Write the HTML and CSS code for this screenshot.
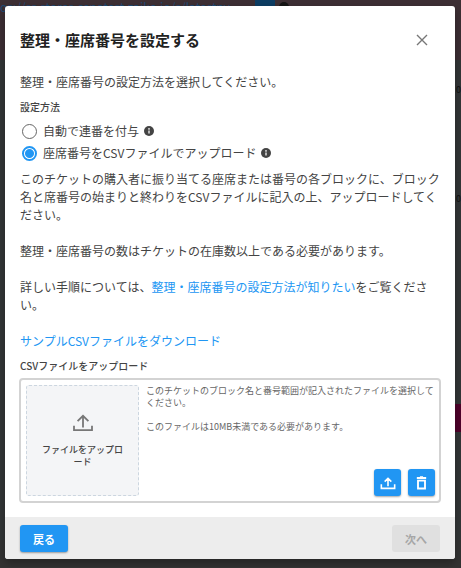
FILE: index.html
```
<!DOCTYPE html>
<html lang="ja">
<head>
  <meta charset="UTF-8" />
  <meta name="viewport" content="width=device-width, initial-scale=1.0"/>
  <title>整理・座席番号を設定する</title>
  <link rel="stylesheet" href="styles.css">
</head>
<body>
  <!-- dimmed page behind the dialog -->
  <div class="page-behind" aria-hidden="true">
    <div class="banner">
      <span class="banner-url">os://ss.stores.cenatest.zaiko.io/s/latestnv</span>
      <span class="banner-copy"></span>
      <span class="banner-info"></span>
    </div>
    <span class="stat stat-one">0</span>
    <span class="stat stat-two">0</span>
    <span class="pink-block"></span>
  </div>

  <main class="dialog" role="dialog" aria-labelledby="dialog-title">
    <header class="dialog-header">
      <h1 id="dialog-title">整理・座席番号を設定する</h1>
      <button type="button" class="close-btn" aria-label="閉じる">
        <svg viewBox="0 0 12 12" width="12" height="12"><path d="M1 1l10 10M11 1L1 11" /></svg>
      </button>
    </header>

    <div class="dialog-body">
      <p class="lead">整理・座席番号の設定方法を選択してください。</p>

      <fieldset class="methods">
        <legend>設定方法</legend>
        <div class="method">
          <input type="radio" name="method" id="auto">
          <label for="auto">自動で連番を付与</label>
          <svg class="info" viewBox="0 0 24 24"><circle cx="12" cy="12" r="12" /><path d="M12 5v4M12 11v7" /></svg>
        </div>
        <div class="method">
          <input type="radio" name="method" id="csv" checked>
          <label for="csv">座席番号をCSVファイルでアップロード</label>
          <svg class="info" viewBox="0 0 24 24"><circle cx="12" cy="12" r="12" /><path d="M12 5v4M12 11v7" /></svg>
        </div>
      </fieldset>

      <p>このチケットの購入者に振り当てる座席または番号の各ブロックに、ブロック名と席番号の始まりと終わりをCSVファイルに記入の上、アップロードしてください。</p>
      <p>整理・座席番号の数はチケットの在庫数以上である必要があります。</p>
      <p>詳しい手順については、<a href="#">整理・座席番号の設定方法が知りたい</a>をご覧ください。</p>
      <p class="sample"><a href="#">サンプルCSVファイルをダウンロード</a></p>

      <h2>CSVファイルをアップロード</h2>
      <div class="upload">
        <button type="button" class="dropzone">
          <svg class="dropzone-icon" viewBox="0 0 24 20"><path d="M2 13v5h20v-5M12 15V2M6 8l6-6 6 6" /></svg>
          <span>ファイルをアップロード</span>
        </button>
        <div class="upload-info">
          <p>このチケットのブロック名と番号範囲が記入されたファイルを選択してください。</p>
          <p>このファイルは10MB未満である必要があります。</p>
          <div class="upload-actions">
            <button type="button" class="btn btn-icon" aria-label="アップロード">
              <svg viewBox="0 0 24 20" width="16" height="14"><path d="M2 12v6h20v-6M12 15V3M7 8l5-5 5 5" /></svg>
            </button>
            <button type="button" class="btn btn-icon" aria-label="削除">
              <svg viewBox="0 0 14 18" width="11" height="14"><path d="M2.5 6h9v10h-9zM1 2.5h12M5 1.5h4" /></svg>
            </button>
          </div>
        </div>
      </div>
    </div>

    <footer class="dialog-footer">
      <button type="button" class="btn">戻る</button>
      <button type="button" class="btn" disabled>次へ</button>
    </footer>
  </main>
</body>
</html>
```
FILE: styles.css
```
* {
  box-sizing: border-box;
}

body {
  margin: 0;
  padding: 6px 6px 8px 5px;
  background: #333;
  color: #444;
  font-family: "Noto Sans CJK JP", sans-serif;
  font-size: 12px;
  line-height: 18px;
}

h1, h2, p {
  margin: 0;
}

a {
  color: #2196f3;
  text-decoration: none;
}

button {
  font-family: inherit;
  cursor: pointer;
}

svg {
  display: block;
  fill: none;
  stroke: currentColor;
}

.page-behind {
  position: absolute;
  inset: 0;
  overflow: hidden;
  background: linear-gradient(#3d2f34 60px, #333637 60px, #333637 540px, #333 540px);
}

.banner {
  display: flex;
  align-items: flex-start;
  height: 60px;
}

.banner-url {
  width: 255px;
  overflow: hidden;
  white-space: nowrap;
  line-height: 14px;
  color: #1d4a75;
}

.banner-copy {
  width: 20px;
  height: 14px;
  background: #0d3d63;
}

.banner-info {
  width: 10px;
  height: 10px;
  margin: 2px 4px;
  border-radius: 50%;
  background: #151515;
}

.stat {
  position: absolute;
  right: 0;
  font-size: 9px;
  color: #111;
}

.stat-one {
  top: 81px;
}

.stat-two {
  top: 190px;
}

.pink-block {
  position: absolute;
  top: 404px;
  right: 0;
  width: 8px;
  height: 28px;
  background: #50022b;
}

.dialog {
  position: relative;
  background: #fff;
  border-radius: 3px;
  overflow: hidden;
  box-shadow: 0 4px 10px rgba(0, 0, 0, 0.3);
}

.dialog-header {
  display: flex;
  justify-content: space-between;
  align-items: center;
  padding: 22px 27px 21px 15px;
}

.dialog-header h1 {
  font-size: 15px;
  line-height: 24px;
  font-weight: 700;
  color: #222;
}

.close-btn {
  padding: 0;
  border: 0;
  background: none;
  color: #777;
}

.close-btn path {
  stroke-width: 1.4;
}

.dialog-body {
  padding: 0 14px 14px 15px;
}

.dialog-body > p {
  margin-bottom: 18px;
}

.dialog-body > .lead {
  margin-bottom: 8px;
}

.methods {
  margin: 0 0 6px;
  padding: 0;
  border: 0;
}

.methods legend {
  padding: 0;
  margin-bottom: 5px;
  font-size: 10px;
  line-height: 16px;
  font-weight: 500;
}

.method {
  display: flex;
  align-items: center;
  height: 22px;
}

.method input {
  appearance: none;
  width: 15px;
  height: 15px;
  margin: 0 6px 0 2px;
  border: 1px solid #666;
  border-radius: 50%;
}

.method input:checked {
  border: 2px solid #2196f3;
  background: radial-gradient(circle, #2196f3 4px, #fff 5px);
}

.info {
  width: 10px;
  height: 10px;
  margin-left: 5px;
}

.info circle {
  fill: #444;
  stroke: none;
}

.info path {
  stroke: #fff;
  stroke-width: 3;
}

.dialog-body > .sample {
  margin-bottom: 8px;
}

.dialog-body h2 {
  margin-bottom: 4px;
  font-size: 10px;
  line-height: 16px;
  font-weight: 500;
}

.upload {
  display: flex;
  gap: 7px;
  margin-left: -1px;
  padding: 5px 4px 5px 5px;
  border: 2px solid #d3d3d3;
  border-radius: 4px;
}

.dropzone {
  display: flex;
  flex-direction: column;
  align-items: center;
  justify-content: center;
  gap: 12px;
  width: 113px;
  height: 111px;
  flex: none;
  padding: 0 14px;
  border: 1px dashed #ccd6e0;
  border-radius: 3px;
  background: #f4f5f7;
  color: #444;
  font-size: 9px;
  line-height: 12px;
  font-weight: 500;
}

.dropzone-icon {
  width: 22px;
  height: 18px;
  color: #777;
  stroke-width: 2;
}

.upload-info {
  display: flex;
  flex-direction: column;
  flex: 1;
  gap: 12px;
  font-size: 9px;
  line-height: 12px;
  color: #666;
}

.upload-actions {
  display: flex;
  justify-content: flex-end;
  gap: 7px;
  margin-top: auto;
}

.btn {
  width: 48px;
  height: 27px;
  padding: 0;
  border: 0;
  border-radius: 3px;
  background: #2196f3;
  color: #fff;
  font-size: 11px;
  line-height: 18px;
  font-weight: 700;
  box-shadow: 0 1px 2px rgba(0, 0, 0, 0.35);
}

.btn:disabled {
  background: #e0e0e0;
  color: #a6a6a6;
  box-shadow: none;
  cursor: default;
}

.btn-icon {
  display: flex;
  align-items: center;
  justify-content: center;
  width: 27px;
}

.btn-icon svg {
  stroke-width: 2.4;
}

.dialog-footer {
  display: flex;
  justify-content: space-between;
  padding: 8px 15px 7px;
  background: #ededed;
}
```
